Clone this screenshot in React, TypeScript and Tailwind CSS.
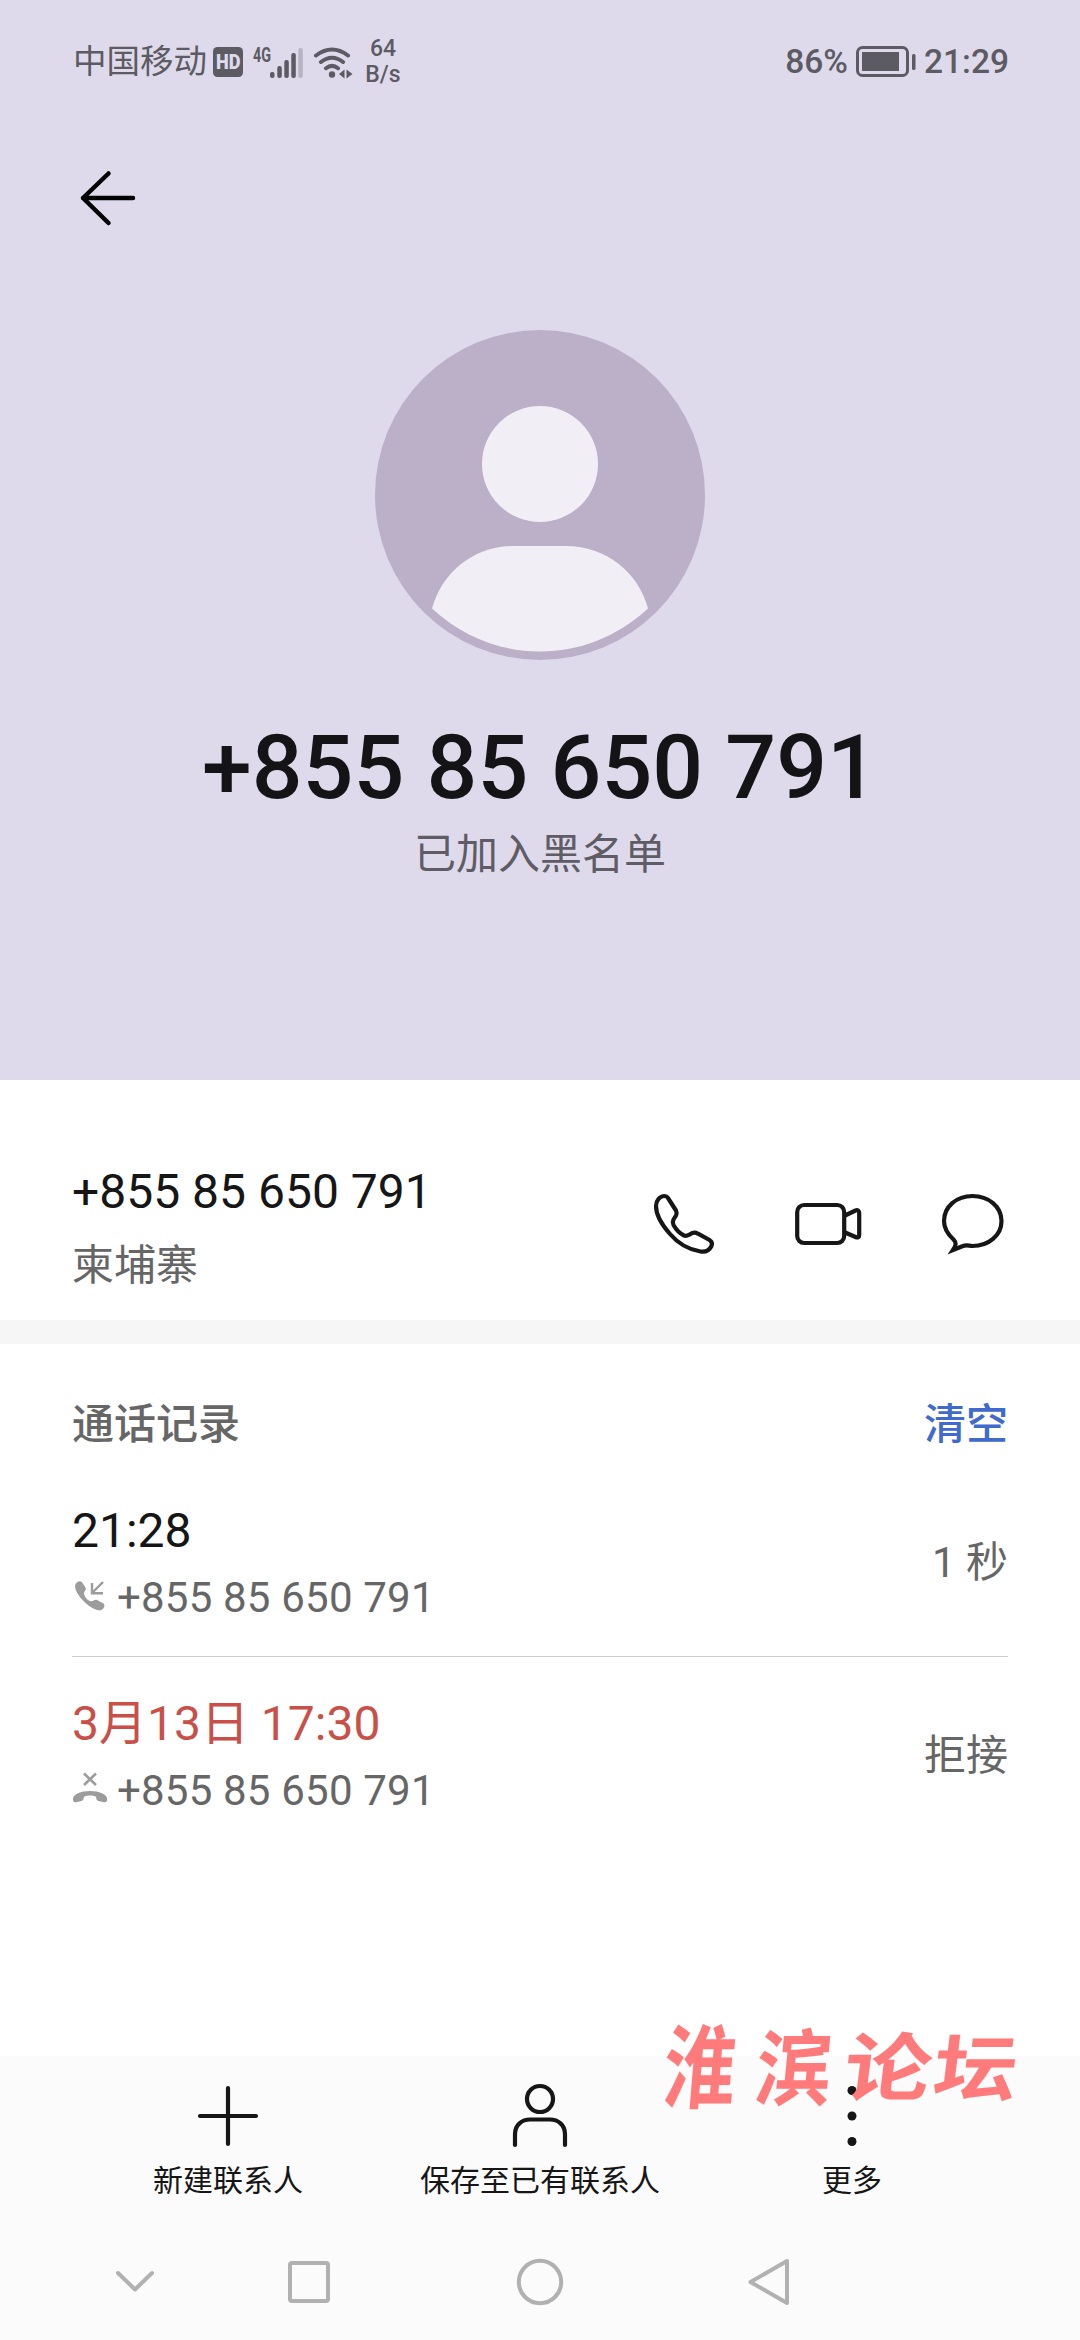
import type { ReactNode } from "react";

const NUMBER = "+855 85 650 791";

const CALLS = [
  { time: "21:28", result: "1 秒", rejected: false },
  { time: "3月13日 17:30", result: "拒接", rejected: true },
];

function StatusBar() {
  return (
    <div className="flex h-[124px] items-center justify-between pr-[71px] pl-[73px] text-[#5c5a63]">
      <div className="flex items-center">
        <span className="text-[33.5px] leading-none">中国移动</span>
        <svg width="30" height="30" viewBox="0 0 30 30" className="ml-[6px]">
          <rect width="30" height="30" rx="4.500" fill="#5c5a63" />
          <text x="3" y="22" fontSize="20" fontWeight="900" textLength="24.500" lengthAdjust="spacingAndGlyphs" fill="#dedaeb" fontFamily="Roboto">
            HD
          </text>
        </svg>
        <svg width="52" height="34" viewBox="0 0 52 34" className="ml-[9px]" fill="#5c5a63">
          <text x="1" y="17" fontSize="19.500" fontWeight="700" textLength="18" lengthAdjust="spacingAndGlyphs" fontFamily="Roboto">
            4G
          </text>
          <rect x="18" y="27" width="4.500" height="6" rx="2" />
          <rect x="25.300" y="21" width="4.500" height="12" rx="2" />
          <rect x="32.300" y="15" width="4.500" height="18" rx="2" />
          <rect x="39.300" y="8" width="4.500" height="25" rx="2" />
          <rect x="46.300" y="3" width="4.500" height="30" rx="2" opacity=".3" />
        </svg>
        <svg width="40" height="34" viewBox="0 0 40 34" className="ml-[9px]" fill="none" stroke="#5c5a63" strokeWidth="4" strokeLinecap="round">
          <path d="M3 10.500Q19 -1.500 35 10.500M8 17Q19 8.500 30 17M13 23.200Q19 18.500 25 23.200" />
          <circle cx="19" cy="29.500" r="3.200" fill="#5c5a63" stroke="none" />
          <path d="M26 29L31.500 24.500V33.500zM39.500 29L33.500 24.500V33.500z" fill="#5c5a63" stroke="none" />
        </svg>
        <div className="ml-[10px] w-[40px] text-center text-[23px] leading-[26px] font-medium">
          <div>64</div>
          <div>B/s</div>
        </div>
      </div>
      <div className="flex items-center text-[33.5px] leading-none font-medium">
        <span>86%</span>
        <svg width="62" height="34" viewBox="0 0 62 34" className="mx-[7px]">
          <rect x="2.500" y="2.500" width="50" height="28" rx="5" fill="none" stroke="#5c5a63" strokeWidth="3" />
          <rect x="7" y="7" width="37" height="19" fill="#5c5a63" />
          <rect x="57" y="9" width="3.500" height="16" rx="1.500" fill="#5c5a63" />
        </svg>
        <span>21:29</span>
      </div>
    </div>
  );
}

function Avatar() {
  return (
    <svg width="330" height="330" viewBox="0 0 330 330" className="mx-auto block">
      <circle cx="165" cy="165" r="165" fill="#bcb0c9" />
      <circle cx="165" cy="134" r="58" fill="#f1eff5" />
      <path d="M57 278.500C67 242 99 216 139 216H191C231 216 263 242 273 278.500C242 307 204 321.500 165 321.500S88 307 57 278.500z" fill="#f1eff5" />
    </svg>
  );
}

function IncomingIcon() {
  return (
    <svg width="36" height="36" viewBox="0 0 36 36" className="mb-[4px]" fill="#9c9c9c">
      <path d="M3.500 6C5 3.500 8 2 10 4.200L13.500 9.500C14.700 12 12 13.300 12 15.500C12.500 19 15.500 22.500 19 23.300C21.500 23.500 22.500 21 25 22L31.500 25.500C33.500 27.500 32 30.500 29.500 32C26 33.500 19 30 13 24.500C6 18 1.500 10 3.500 6z" />
      <path d="M31 4L20 15M20 5V15.200H31" fill="none" stroke="#9c9c9c" strokeWidth="2.400" />
    </svg>
  );
}

function RejectedIcon() {
  return (
    <svg width="36" height="36" viewBox="0 0 36 36" className="mb-[4px]" fill="#9c9c9c">
      <path d="M1 28C1 23 9 20 18 20S35 23 35.200 28C35.300 30.500 34 31.500 32 31.200L26.500 30C23.500 29 25 26.500 23.500 25.500C20.500 24.300 15.500 24.300 12.500 25.500C11 26.500 12.500 29 9.500 30L4 31.200C2 31.500 .800 30.500 1 28z" />
      <path d="M12 2.500L24 14M24 2.500L12 14" fill="none" stroke="#9c9c9c" strokeWidth="2.600" />
    </svg>
  );
}

function Action({ label, children }: { label: string; children: ReactNode }) {
  return (
    <button className="flex w-[312px] flex-col items-center">
      <svg width="72" height="72" viewBox="0 0 72 72" fill="none" stroke="#161616" strokeWidth="4.200" strokeLinecap="round">
        {children}
      </svg>
      <span className="mt-[13px] text-[30px] leading-[32px] whitespace-nowrap text-[#161616]">{label}</span>
    </button>
  );
}

export default function App() {
  return (
    <div className="relative flex h-[2340px] w-[1080px] flex-col overflow-hidden bg-white font-[Roboto,'Noto_Sans_CJK_SC',sans-serif]">
      <header className="h-[1080px] bg-[#dedaeb]">
        <StatusBar />
        <svg width="72" height="72" viewBox="0 0 72 72" className="mt-[38px] ml-[72px]" fill="none" stroke="#000" strokeWidth="4.500" strokeLinecap="round" strokeLinejoin="round">
          <path d="M36.500 11.500L11 36L36.500 61M11 36H61" />
        </svg>
        <div className="mt-[96px]">
          <Avatar />
        </div>
        <h1 className="mt-[55px] text-center text-[89.5px] leading-[105px] font-medium text-[#141417]">{NUMBER}</h1>
        <p className="mt-[5px] text-center text-[42px] leading-[60px] text-[#5f5c66]">已加入黑名单</p>
      </header>

      <section className="flex h-[240px] justify-between px-[72px] pt-[84px]">
        <div>
          <div className="text-[48px] leading-[56px] text-[#161616]">{NUMBER}</div>
          <div className="mt-[16px] text-[42px] leading-[60px] text-[#666]">柬埔寨</div>
        </div>
        <div className="mt-[24px] flex h-[72px] gap-[72px]">
          <svg width="72" height="72" viewBox="0 0 72 72" fill="none" stroke="#161616" strokeWidth="4.200" strokeLinejoin="round">
            <path d="M8 18C8 12.500 12 8 16.500 8C18 8 19 8.500 20 10L28 22.500C29 24.500 29 25.500 28 27.500L25.500 31.500C24.500 33.500 24.500 35 25.500 37C28 41.500 32 45.500 36 47.500C38 48.200 39 48 41 46.800L44 45.200C46 44.300 48 44.500 50 45.700L61.500 52C64 53.500 64.700 55 63.500 58C61.500 62 57.500 64.300 52.500 63.500C43 62 31 56.500 22 46C14 37 8 26 8 18z" />
          </svg>
          <svg width="72" height="72" viewBox="0 0 72 72" fill="none" stroke="#161616" strokeWidth="4.200" strokeLinejoin="round">
            <rect x="5.200" y="17" width="47" height="38" rx="7" />
            <path d="M52 28L63.500 22.500C65.500 21.700 67.200 22.500 67.200 25V47C67.200 49.500 65.500 50 63.500 49L52 44" />
          </svg>
          <svg width="72" height="72" viewBox="0 0 72 72" fill="none" stroke="#161616" strokeWidth="4.200">
            <path d="M17 62C20.300 57 20.500 54.500 17.500 51.500C11.500 46 8 40.500 8 33C8 18.500 20.500 8 36.500 8S65.500 18.500 65.500 33S52.500 58 36.500 58C33 58 30.500 56.500 27 58L17 62z" />
          </svg>
        </div>
      </section>

      <div className="h-[24px] bg-[#f6f6f6]" />

      <section className="h-[712px] px-[72px] pt-[51px]">
        <div className="flex justify-between text-[42px] leading-[60px] font-medium">
          <h2 className="text-[#666]">通话记录</h2>
          <button className="text-[#416acd]">清空</button>
        </div>
        <ul className="mt-[9px] divide-y divide-[#ccc]">
          {CALLS.map((call) => (
            <li key={call.time} className="flex h-[193px] justify-between">
              <div className="pt-[35px]">
                <div className={`text-[48px] leading-[64px] ${call.rejected ? "text-[#c94f49]" : "text-[#161616]"}`}>{call.time}</div>
                <div className="flex items-center gap-[9px] text-[42px] leading-[69px] tracking-[0.2px] text-[#666]">
                  {call.rejected ? <RejectedIcon /> : <IncomingIcon />}
                  {NUMBER}
                </div>
              </div>
              <span className="pt-[69px] text-[42px] leading-[60px] text-[#666]">{call.result}</span>
            </li>
          ))}
        </ul>
      </section>

      <footer className="h-[284px] bg-[#fbfbfb]">
        <div className="flex px-[72px] pt-[24px]">
          <Action label="新建联系人">
            <path d="M36 8V64M8 36H64" />
          </Action>
          <Action label="保存至已有联系人">
            <circle cx="36" cy="19" r="13" />
            <path d="M11 65V54C11 45 18 39.500 26 39.500H46C54 39.500 61 45 61 54V65" />
          </Action>
          <Action label="更多">
            <g fill="#161616" stroke="none">
              <circle cx="36" cy="10.500" r="4.500" />
              <circle cx="36" cy="36" r="4.500" />
              <circle cx="36" cy="61.500" r="4.500" />
            </g>
          </Action>
        </div>
        <nav className="mt-[49px] flex pl-[99px]">
          <svg width="72" height="72" viewBox="0 0 72 72" fill="none" stroke="#b1b1b1" strokeWidth="4" strokeLinecap="round" strokeLinejoin="round">
            <path d="M19 27L36 43.500L53 27" />
          </svg>
          <svg width="72" height="72" viewBox="0 0 72 72" className="ml-[102px]" fill="none" stroke="#b1b1b1" strokeWidth="4">
            <rect x="17" y="17" width="38" height="38" rx="2" />
          </svg>
          <svg width="72" height="72" viewBox="0 0 72 72" className="ml-[159px]" fill="none" stroke="#b1b1b1" strokeWidth="4">
            <circle cx="36" cy="36" r="21.200" />
          </svg>
          <svg width="72" height="72" viewBox="0 0 72 72" className="ml-[157px]" fill="none" stroke="#b1b1b1" strokeWidth="4" strokeLinejoin="round">
            <path d="M17.500 36L54 15V57z" />
          </svg>
        </nav>
      </footer>

      <div className="absolute top-[2025px] left-[653px] flex text-center text-[76px] leading-[90px] font-bold text-[#ff7b7b]">
        <span className="w-[94px] scale-x-95 scale-y-120 -skew-x-6">淮</span>
        <span className="w-[94px] scale-x-100 scale-y-110 -skew-x-6">滨</span>
        <span className="w-[94px] scale-x-115 scale-y-98 -skew-x-6">论</span>
        <span className="flex w-[81px] scale-x-110 scale-y-95 -skew-x-6 justify-center">坛</span>
      </div>
    </div>
  );
}
